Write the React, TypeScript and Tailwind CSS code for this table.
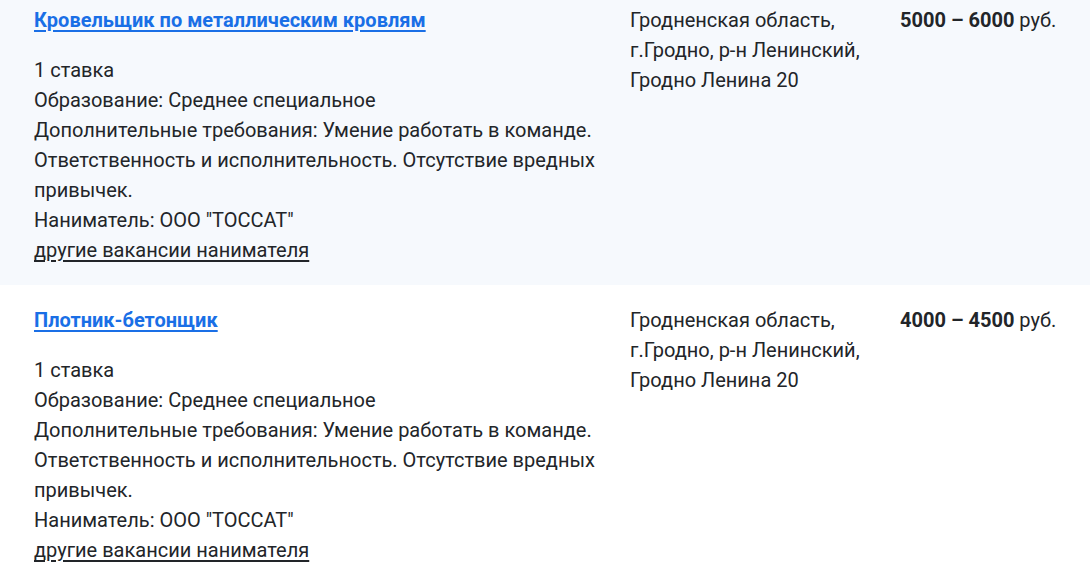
const vacancies = [
  { title: 'Кровельщик по металлическим кровлям', min: '5000', max: '6000' },
  { title: 'Плотник-бетонщик', min: '4000', max: '4500' },
];

function VacancyRow({ title, min, max, shaded }: { title: string; min: string; max: string; shaded: boolean }) {
  return (
    <div className={`flex py-5 pl-[34px] text-[20px] leading-[30px] text-[#222529] ${shaded ? 'bg-[#f6f9fd]' : 'bg-white'}`}>
      <div className="w-[566px] shrink-0">
        <a href="#" className="font-bold text-[#1a6fe6] underline underline-offset-[3px]">
          {title}
        </a>
        <div className="mt-5">
          <div>1 ставка</div>
          <div>Образование: Среднее специальное</div>
          <div>
            Дополнительные требования: Умение работать в команде. Ответственность и исполнительность. Отсутствие вредных
            привычек.
          </div>
          <div>Наниматель: ООО "ТОССАТ"</div>
          <a href="#" className="underline underline-offset-[3px]">
            другие вакансии нанимателя
          </a>
        </div>
      </div>
      <div className="ml-[30px] w-[240px] shrink-0">
        Гродненская область, г.Гродно, р-н Ленинский, Гродно Ленина 20
      </div>
      <div className="ml-[30px] shrink-0">
        <b>
          {min} – {max}
        </b>{' '}
        руб.
      </div>
    </div>
  );
}

export default function App() {
  return (
    <div className="h-[585px] overflow-hidden bg-white" style={{ fontFamily: 'Roboto, sans-serif' }}>
      <div className="-mt-[15px]">
        {vacancies.map((v, i) => (
          <VacancyRow key={v.title} {...v} shaded={i === 0} />
        ))}
      </div>
    </div>
  );
}
